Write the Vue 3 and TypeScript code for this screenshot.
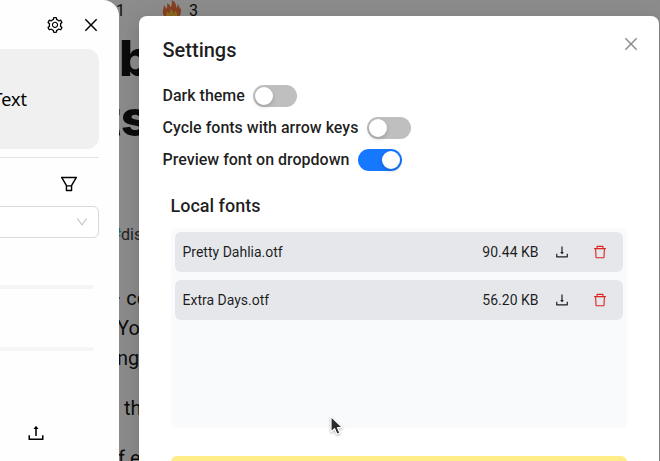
<script setup lang="ts">
import { ref } from 'vue'

interface Toggle {
  label: string
  on: boolean
}

interface FontFile {
  name: string
  size: string
}

const toggles = ref<Toggle[]>([
  { label: 'Dark theme', on: false },
  { label: 'Cycle fonts with arrow keys', on: false },
  { label: 'Preview font on dropdown', on: true },
])

const fonts: FontFile[] = [
  { name: 'Pretty Dahlia.otf', size: '90.44 KB' },
  { name: 'Extra Days.otf', size: '56.20 KB' },
]

const icons = {
  close:
    'M799.86 166.31c.02 0 .04.02.08.06l57.69 57.7c.04.03.05.05.06.08a.12.12 0 010 .06c0 .03-.02.05-.06.09L569.93 512l287.7 287.7c.04.04.05.06.06.09a.12.12 0 010 .07c0 .02-.02.04-.06.08l-57.7 57.69c-.03.04-.05.05-.07.06a.12.12 0 01-.07 0c-.03 0-.05-.02-.09-.06L512 569.93l-287.7 287.7c-.04.04-.06.05-.09.06a.12.12 0 01-.07 0c-.02 0-.04-.02-.08-.06l-57.69-57.7c-.04-.03-.05-.05-.06-.07a.12.12 0 010-.07c0-.03.02-.05.06-.09L454.07 512l-287.7-287.7c-.04-.04-.05-.06-.06-.09a.12.12 0 010-.07c0-.02.02-.04.06-.08l57.7-57.69c.03-.04.05-.05.07-.06a.12.12 0 01.07 0c.03 0 .05.02.09.06L512 454.07l287.7-287.7c.04-.04.06-.05.09-.06a.12.12 0 01.07 0z',
  download:
    'M505.7 661a8 8 0 0012.6 0l112-141.7c4.1-5.2.4-12.9-6.3-12.9h-74.1V168c0-4.4-3.6-8-8-8h-60c-4.4 0-8 3.6-8 8v338.3H400c-6.7 0-10.4 7.7-6.3 12.9l112 141.8zM878 626h-60c-4.4 0-8 3.6-8 8v154H214V634c0-4.4-3.6-8-8-8h-60c-4.4 0-8 3.6-8 8v198c0 17.7 14.3 32 32 32h684c17.7 0 32-14.3 32-32V634c0-4.4-3.6-8-8-8z',
  upload:
    'M400 317.7h73.9V656c0 4.4 3.6 8 8 8h60c4.4 0 8-3.6 8-8V317.7H624c6.7 0 10.4-7.7 6.3-12.9L518.3 163a8 8 0 00-12.6 0l-112 141.7c-4.1 5.3-.4 13 6.3 13zM878 626h-60c-4.4 0-8 3.6-8 8v154H214V634c0-4.4-3.6-8-8-8h-60c-4.4 0-8 3.6-8 8v198c0 17.7 14.3 32 32 32h684c17.7 0 32-14.3 32-32V634c0-4.4-3.6-8-8-8z',
  remove:
    'M360 184h-8c4.4 0 8-3.6 8-8v8h304v-8c0 4.4 3.6 8 8 8h-8v72h72v-80c0-35.3-28.7-64-64-64H352c-35.3 0-64 28.7-64 64v80h72v-72zm504 72H160c-17.7 0-32 14.3-32 32v32c0 4.4 3.6 8 8 8h60.4l24.7 523c1.6 34.1 29.8 61 63.9 61h454c34.2 0 62.3-26.8 63.9-61l24.7-523H888c4.4 0 8-3.6 8-8v-32c0-17.7-14.3-32-32-32zM731.3 840H292.7l-24.2-512h487l-24.2 512z',
  filter:
    'M880.1 154H143.9c-24.5 0-39.8 26.7-27.5 48L349 597.4V838c0 17.7 14.2 32 31.8 32h262.4c17.6 0 31.8-14.3 31.8-32V597.4L907.7 202c12.2-21.3-3.1-48-27.6-48zM603.4 798H420.6V642h182.9v156zm9.6-236.6l-9.5 16.6h-183l-9.5-16.6L212.7 226h598.6L613 561.4z',
  down: 'M884 256h-75c-5.1 0-9.9 2.5-12.9 6.6L512 654.2 227.9 262.6c-3-4.1-7.8-6.6-12.9-6.6h-75c-6.5 0-10.3 7.4-6.5 12.7l352.6 486.1c12.8 17.6 39 17.6 51.7 0l352.6-486.1c3.9-5.3.1-12.7-6.4-12.7z',
  setting:
    'M924.8 625.7l-65.5-56c3.1-19 4.7-38.4 4.7-57.8s-1.6-38.8-4.7-57.8l65.5-56a32.03 32.03 0 009.3-35.2l-.9-2.6a443.74 443.74 0 00-79.7-137.9l-1.8-2.1a32.12 32.12 0 00-35.1-9.5l-81.3 28.9c-30-24.6-63.5-44-99.7-57.6l-15.7-85a32.05 32.05 0 00-25.8-25.7l-2.7-.5c-52.1-9.4-106.9-9.4-159 0l-2.7.5a32.05 32.05 0 00-25.8 25.7l-15.8 85.4a351.86 351.86 0 00-99 57.4l-81.9-29.1a32 32 0 00-35.1 9.5l-1.8 2.1a446.02 446.02 0 00-79.7 137.9l-.9 2.6c-4.5 12.5-.8 26.5 9.3 35.2l66.3 56.6c-3.1 18.8-4.6 38-4.6 57.1 0 19.2 1.5 38.4 4.6 57.1L99 625.5a32.03 32.03 0 00-9.3 35.2l.9 2.6c18.1 50.4 44.9 96.9 79.7 137.9l1.8 2.1a32.12 32.12 0 0035.1 9.5l81.9-29.1c29.8 24.5 63.1 43.9 99 57.4l15.8 85.4a32.05 32.05 0 0025.8 25.7l2.7.5a449.4 449.4 0 00159 0l2.7-.5a32.05 32.05 0 0025.8-25.7l15.7-85a350 350 0 0099.7-57.6l81.3 28.9a32 32 0 0035.1-9.5l1.8-2.1c34.8-41.1 61.6-87.5 79.7-137.9l.9-2.6c4.5-12.3.8-26.3-9.3-35zM788.3 465.9c2.5 15.1 3.8 30.6 3.8 46.1s-1.3 31-3.8 46.1l-6.6 40.1 74.7 63.9a370.03 370.03 0 01-42.6 73.6L721 702.8l-31.4 25.8c-23.9 19.6-50.5 35-79.3 45.8l-38.1 14.3-17.9 97a377.5 377.5 0 01-85 0l-17.9-97.2-37.8-14.5c-28.5-10.8-55-26.2-78.7-45.7l-31.4-25.9-93.4 33.2c-17-22.9-31.2-47.6-42.6-73.6l75.5-64.5-6.5-40c-2.4-14.9-3.7-30.3-3.7-45.5 0-15.3 1.2-30.6 3.7-45.5l6.5-40-75.5-64.5c11.3-26.1 25.6-50.7 42.6-73.6l93.4 33.2 31.4-25.9c23.7-19.5 50.2-34.9 78.7-45.7l37.9-14.3 17.9-97.2c28.1-3.2 56.8-3.2 85 0l17.9 97 38.1 14.3c28.7 10.8 55.4 26.2 79.3 45.8l31.4 25.8 92.8-32.9c17 22.9 31.2 47.6 42.6 73.6L781.8 426l6.5 39.9zM512 326c-97.2 0-176 78.8-176 176s78.8 176 176 176 176-78.8 176-176-78.8-176-176-176zm79.2 255.2A111.6 111.6 0 01512 614c-29.9 0-58-11.7-79.2-32.8A111.6 111.6 0 01400 502c0-29.9 11.7-58 32.8-79.2C454 401.6 482.1 390 512 390c29.9 0 58 11.6 79.2 32.8A111.6 111.6 0 01624 502c0 29.9-11.7 58-32.8 79.2z',
}
</script>

<template>
  <div class="screen">
    <article class="post">
      <div class="reactions">
        <span class="count">1</span>
        <svg class="flame" viewBox="0 0 20 22">
          <path
            fill="#f4743c"
            d="M10 22C4 22 0 19 0 13c0-3 1-4 1-7 1.500.8 2.300 2 2.600 4C5 8 5 6 4.500 3.500 7 4.500 8 6 8.200 8 10 6 10.500 3 9.500 0c4 1.800 5.500 5 5 8.500C16 7.500 16.500 6 16.200 4c2 2 1.500 4 2.500 6 .8-.6 1-1.500.9-2.500C21 17 17.500 22 10 22z"
          />
          <path
            fill="#ffc23c"
            d="M10 22c-4 0-6.500-2-6.500-5.500 0-1.500.6-2.500.6-4 1.200.5 1.900 1.300 2.200 2.500C8 13.500 8.500 12 8.300 10c2.200 1.200 3 3 3 5 1.200-.8 1.900-2 2-3.500 1.700 1.500 2.900 3.500 2.700 5.500-.2 3.200-2.500 5-6 5z"
          />
        </svg>
        <span>3</span>
      </div>
      <h1 class="headline"><span>b</span><span class="second">ts</span></h1>
      <p class="tags"><span class="hash">#</span>dis</p>
      <p class="para">
        <span class="line one">· co</span>
        <span class="line two">You</span>
        <span class="line two">ng</span>
      </p>
      <p class="para"><span class="line three">the</span></p>
      <p class="para"><span class="line four">f ev</span></p>
    </article>

    <div class="mask"></div>

    <section class="modal">
      <header class="modal-head">
        <h2>Settings</h2>
        <svg class="icon modal-close" viewBox="64 64 896 896"><path :d="icons.close" /></svg>
      </header>
      <div class="toggles">
        <label v-for="t in toggles" :key="t.label" class="toggle">
          <span>{{ t.label }}</span>
          <button
            type="button"
            role="switch"
            class="switch"
            :class="{ on: t.on }"
            :aria-checked="t.on"
            @click="t.on = !t.on"
          >
            <i class="knob"></i>
          </button>
        </label>
      </div>
      <div class="local">
        <h3>Local fonts</h3>
        <ul class="fonts">
          <li v-for="f in fonts" :key="f.name" class="font">
            <span class="name">{{ f.name }}</span>
            <span class="size">{{ f.size }}</span>
            <svg class="icon" viewBox="64 64 896 896"><path :d="icons.download" /></svg>
            <svg class="icon danger" viewBox="64 64 896 896"><path :d="icons.remove" /></svg>
          </li>
        </ul>
        <div class="notice"></div>
      </div>
    </section>

    <aside class="drawer">
      <div class="drawer-bar">
        <svg class="icon" viewBox="64 64 896 896"><path :d="icons.setting" /></svg>
        <svg class="icon" viewBox="64 64 896 896"><path :d="icons.close" /></svg>
      </div>
      <div class="preview">Text</div>
      <hr class="divider" />
      <div class="filter-row">
        <svg class="icon" viewBox="64 64 896 896"><path :d="icons.filter" /></svg>
      </div>
      <div class="select">
        <svg class="icon" viewBox="64 64 896 896"><path :d="icons.down" /></svg>
      </div>
      <div class="rail"></div>
      <div class="rail"></div>
      <div class="upload-row">
        <svg class="icon" viewBox="64 64 896 896"><path :d="icons.upload" /></svg>
      </div>
    </aside>

    <svg class="cursor" viewBox="0 0 16 22">
      <path
        d="M2 1.500V17l3.600-3.300L8 19.200l2.900-1.200-2.400-5.300h5.200z"
        fill="#2b2b2b"
        stroke="#fff"
        stroke-width="1.200"
        stroke-linejoin="round"
      />
    </svg>
  </div>
</template>

<style>
body {
  overflow: hidden;
}
</style>

<style scoped>
.screen {
  position: relative;
  width: 660px;
  height: 461px;
  overflow: hidden;
  background: #fff;
  font-family: Roboto, 'Liberation Sans', sans-serif;
  color: rgba(0, 0, 0, 0.88);
}
h1,
h2,
h3,
p,
ul {
  margin: 0;
  padding: 0;
}
.icon {
  display: block;
  flex: none;
  fill: currentColor;
}

/* article behind the overlay */
.post {
  height: 461px;
  overflow: hidden;
  padding-left: 116px;
  box-sizing: border-box;
  color: #171717;
}
.reactions {
  display: flex;
  align-items: center;
  height: 20px;
  font-size: 16px;
}
.count {
  width: 46px;
}
.flame {
  width: 20px;
  height: 20px;
  margin-right: 7px;
}
.headline {
  display: flex;
  flex-direction: column;
  margin-top: 8px;
  font-family: Inter, sans-serif;
  font-size: 50px;
  font-weight: 800;
  line-height: 60px;
}
.headline span {
  padding-left: 3px;
}
.headline .second {
  padding-left: 0;
  margin-left: -14px;
}
.tags {
  margin-top: 75px;
  font-size: 16px;
  line-height: 24px;
  color: #404040;
}
.hash {
  display: inline-block;
  width: 5px;
  direction: rtl;
  color: #10b981;
}
.para {
  margin-top: 36px;
  font-size: 20px;
  line-height: 30px;
}
.para + .para {
  margin-top: 20px;
}
.line {
  display: block;
}
.two {
  margin-left: 1px;
}
.three {
  padding-left: 8px;
}
.four {
  padding-left: 2px;
}

.mask {
  position: absolute;
  inset: 0;
  background: rgba(0, 0, 0, 0.45);
}

/* settings dialog */
.modal {
  position: absolute;
  top: 16px;
  left: 138.5px;
  box-sizing: border-box;
  width: 520px;
  height: 600px;
  padding: 20px 24px;
  border-radius: 8px;
  background: #fff;
  box-shadow:
    0 6px 16px 0 rgba(0, 0, 0, 0.08),
    0 3px 6px -4px rgba(0, 0, 0, 0.12),
    0 9px 28px 8px rgba(0, 0, 0, 0.05);
}
.modal-head {
  display: flex;
  justify-content: space-between;
  height: 28px;
}
.modal-head h2 {
  font-size: 20px;
  font-weight: 500;
  line-height: 28px;
}
.modal-close {
  width: 16px;
  height: 16px;
  margin-right: -4px;
  color: rgba(0, 0, 0, 0.45);
}
.toggles {
  display: flex;
  flex-direction: column;
  gap: 8px;
  margin-top: 20px;
}
.toggle {
  display: flex;
  align-items: center;
  gap: 8.2px;
  height: 24px;
  font-size: 16px;
  font-weight: 500;
}
.toggle span {
  padding-bottom: 1px;
}
.switch {
  display: flex;
  box-sizing: border-box;
  width: 44px;
  height: 22px;
  padding: 2px;
  border: 0;
  border-radius: 11px;
  background: #bfbfbf;
}
.switch.on {
  justify-content: flex-end;
  background: #1677ff;
}
.knob {
  width: 18px;
  height: 18px;
  border-radius: 9px;
  background: #fff;
  box-shadow: 0 2px 4px rgba(0, 35, 11, 0.2);
}
.local {
  margin-top: 20px;
  padding: 0 8px;
}
.local h3 {
  font-size: 18px;
  font-weight: 500;
  line-height: 28px;
}
.fonts {
  display: flex;
  flex-direction: column;
  gap: 8px;
  box-sizing: border-box;
  height: 200px;
  margin-top: 8px;
  padding: 4px;
  border-radius: 6px;
  background: #f9fafb;
  list-style: none;
}
.font {
  display: flex;
  align-items: center;
  height: 40px;
  padding: 0 16px 0 8px;
  border-radius: 6px;
  background: #e5e7eb;
  font-size: 14px;
}
.name {
  flex: 1;
}
.font .icon {
  width: 14px;
  height: 14px;
  margin-left: 16px;
}
.font .danger {
  margin-left: 24px;
  color: #dc2626;
}
.notice {
  height: 60px;
  margin-top: 28px;
  border-radius: 6px;
  background: #ffee88;
}

/* font panel at the left edge */
.drawer {
  position: absolute;
  top: 0;
  left: -200px;
  box-sizing: border-box;
  width: 319px;
  height: 480px;
  padding: 16px 20px 0;
  border-radius: 0 16px 0 0;
  background: #fefefe;
  color: #000;
}
.drawer-bar {
  display: flex;
  align-items: center;
  justify-content: flex-end;
  gap: 20px;
  height: 18px;
}
.drawer-bar .icon {
  width: 16px;
  height: 16px;
}
.preview {
  box-sizing: border-box;
  height: 100px;
  margin-top: 15px;
  padding-right: 72px;
  border-radius: 12px;
  background: #f0f0f0;
  font-family: 'Noto Sans', sans-serif;
  font-size: 18px;
  line-height: 100px;
  text-align: right;
}
.divider {
  height: 1px;
  margin: 8px 0 0;
  border: 0;
  background: #e3e3e3;
}
.filter-row {
  display: flex;
  justify-content: flex-end;
  margin-top: 17px;
  padding-right: 21px;
}
.filter-row .icon,
.upload-row .icon {
  width: 18px;
  height: 18px;
}
.select {
  display: flex;
  align-items: center;
  justify-content: flex-end;
  box-sizing: border-box;
  height: 32px;
  margin-top: 13px;
  padding-right: 10px;
  border: 1px solid #d9d9d9;
  border-radius: 6px;
  background: #fff;
  color: #bfbfbf;
}
.select .icon {
  width: 12px;
  height: 12px;
}
.rail {
  height: 4px;
  margin: 47px 5px 0 0;
  border-radius: 2px;
  background: #f5f5f5;
}
.rail + .rail {
  margin-top: 58px;
}
.upload-row {
  display: flex;
  justify-content: flex-end;
  margin-top: 73px;
  padding-right: 54px;
}

.cursor {
  position: absolute;
  top: 415px;
  left: 329px;
  width: 16px;
  height: 22px;
  filter: drop-shadow(0 1px 1px rgba(0, 0, 0, 0.3));
}
</style>
